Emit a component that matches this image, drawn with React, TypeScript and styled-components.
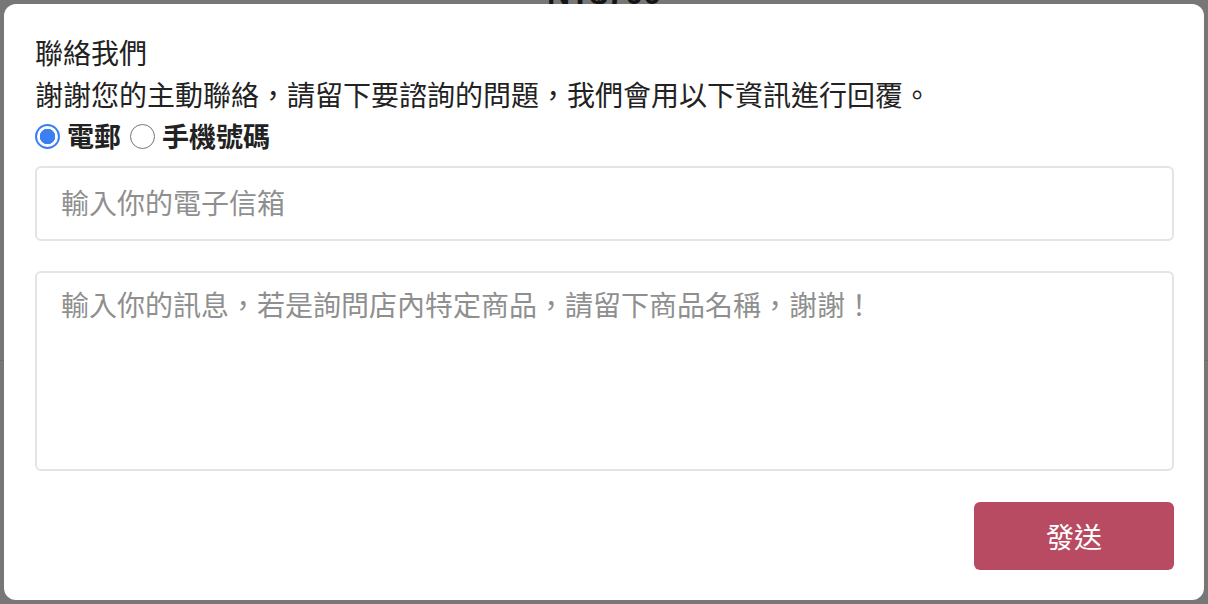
import { useState } from "react";
import styled, { createGlobalStyle } from "styled-components";

const GlobalStyle = createGlobalStyle`
    html, body {
        margin: 0;
        padding: 0;
        background: #777777;
    }
    * {
        box-sizing: border-box;
    }
`;

const Overlay = styled.div`
    position: relative;
    width: 1208px;
    height: 604px;
    padding: 4px;
    background: #777777;
    overflow: hidden;
    font-family: "Noto Sans CJK TC", "Noto Sans", sans-serif;
`;

const PriceBehind = styled.div`
    position: absolute;
    top: -25px;
    left: 0;
    right: 0;
    text-align: center;
    font-family: "Liberation Sans", Arial, sans-serif;
    font-weight: 700;
    font-size: 32px;
    color: #151515;
`;

const DividerBehind = styled.div`
    position: absolute;
    top: 360px;
    left: 0;
    right: 0;
    height: 1px;
    background: #6c6c6c;
`;

const Modal = styled.form`
    position: relative;
    display: flex;
    flex-direction: column;
    height: 100%;
    padding: 27px 30px 29px 31px;
    background: #ffffff;
    border-radius: 12px;
    color: #222222;
`;

const Title = styled.h2`
    margin: 0;
    font-size: 28px;
    font-weight: 400;
    line-height: 42px;
`;

const Description = styled.p`
    margin: 0;
    font-size: 28px;
    line-height: 42px;
`;

const RadioRow = styled.div`
    display: flex;
    align-items: center;
    height: 42px;
    gap: 9px;
`;

const RadioLabel = styled.label`
    display: flex;
    align-items: center;
    gap: 7px;
    font-size: 27px;
    font-weight: 700;
    line-height: 42px;
    color: #222222;
    cursor: pointer;
`;

const RadioInput = styled.input`
    appearance: none;
    margin: 0;
    width: 25px;
    height: 25px;
    border-radius: 50%;
    border: 1.5px solid #767676;
    background: #ffffff;
    cursor: pointer;

    &:checked {
        border: 2px solid #3b7ff2;
        background: radial-gradient(circle, #3b7ff2 0 7.5px, #ffffff 8px);
    }
`;

const Field = styled.input`
    margin-top: 9px;
    width: 100%;
    height: 75px;
    padding: 0 24px 3px;
    border: 2px solid #e4e4e4;
    border-radius: 6px;
    font-family: inherit;
    font-size: 28px;
    color: #222222;
    outline: none;

    &::placeholder {
        color: #8f8f8f;
    }
`;

const MessageArea = styled.textarea`
    margin-top: 30px;
    width: 100%;
    height: 200px;
    padding: 10px 24px;
    border: 2px solid #e4e4e4;
    border-radius: 6px;
    font-family: inherit;
    font-size: 28px;
    line-height: 42px;
    color: #222222;
    resize: none;
    outline: none;

    &::placeholder {
        color: #8f8f8f;
    }
`;

const Footer = styled.div`
    display: flex;
    justify-content: flex-end;
    margin-top: 31px;
`;

const SendButton = styled.button`
    width: 200px;
    height: 68px;
    border: none;
    border-radius: 6px;
    background: #b84b61;
    color: #ffffff;
    font-family: inherit;
    font-size: 28px;
    cursor: pointer;
`;

const App = () => {
    const [method, setMethod] = useState<"email" | "phone">("email");

    return (
        <>
            <GlobalStyle />
            <Overlay>
                <PriceBehind>NT$700</PriceBehind>
                <DividerBehind />
                <Modal onSubmit={(e) => e.preventDefault()}>
                    <Title>聯絡我們</Title>
                    <Description>
                        謝謝您的主動聯絡，請留下要諮詢的問題，我們會用以下資訊進行回覆。
                    </Description>
                    <RadioRow>
                        <RadioLabel>
                            <RadioInput
                                type="radio"
                                name="contact"
                                checked={method === "email"}
                                onChange={() => setMethod("email")}
                            />
                            電郵
                        </RadioLabel>
                        <RadioLabel>
                            <RadioInput
                                type="radio"
                                name="contact"
                                checked={method === "phone"}
                                onChange={() => setMethod("phone")}
                            />
                            手機號碼
                        </RadioLabel>
                    </RadioRow>
                    <Field
                        type="text"
                        placeholder={method === "email" ? "輸入你的電子信箱" : "輸入你的手機號碼"}
                    />
                    <MessageArea placeholder="輸入你的訊息，若是詢問店內特定商品，請留下商品名稱，謝謝！" />
                    <Footer>
                        <SendButton type="submit">發送</SendButton>
                    </Footer>
                </Modal>
            </Overlay>
        </>
    );
};

export default App;
